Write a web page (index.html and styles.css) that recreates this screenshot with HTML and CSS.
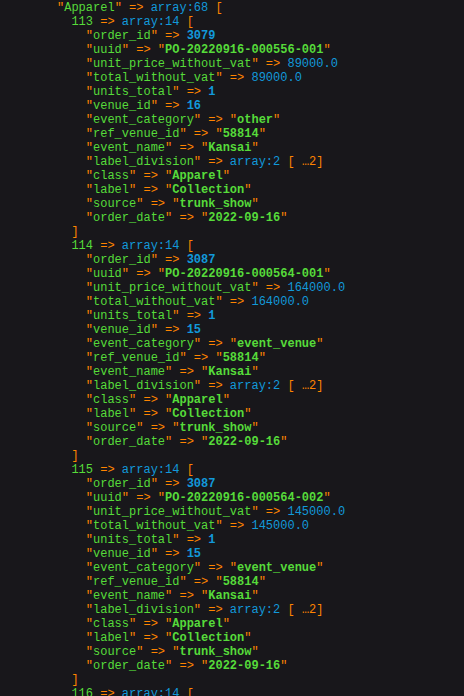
FILE: index.html
```html
<!DOCTYPE html>
<html>
<head>
<meta charset="utf-8">
<link rel="stylesheet" href="styles.css">
</head>
<body>
<pre class="dump">"<span class="k">Apparel</span>" =&gt; <span class="note">array:68</span> [
  <span class="i">113</span> =&gt; <span class="note">array:14</span> [
    "<span class="k">order_id</span>" =&gt; <span class="n">3079</span>
    "<span class="k">uuid</span>" =&gt; "<span class="s">PO-20220916-000556-001</span>"
    "<span class="k">unit_price_without_vat</span>" =&gt; <span class="f">89000.0</span>
    "<span class="k">total_without_vat</span>" =&gt; <span class="f">89000.0</span>
    "<span class="k">units_total</span>" =&gt; <span class="n">1</span>
    "<span class="k">venue_id</span>" =&gt; <span class="n">16</span>
    "<span class="k">event_category</span>" =&gt; "<span class="s">other</span>"
    "<span class="k">ref_venue_id</span>" =&gt; "<span class="s">58814</span>"
    "<span class="k">event_name</span>" =&gt; "<span class="s">Kansai</span>"
    "<span class="k">label_division</span>" =&gt; <span class="note">array:2</span> [ …2]
    "<span class="k">class</span>" =&gt; "<span class="s">Apparel</span>"
    "<span class="k">label</span>" =&gt; "<span class="s">Collection</span>"
    "<span class="k">source</span>" =&gt; "<span class="s">trunk_show</span>"
    "<span class="k">order_date</span>" =&gt; "<span class="s">2022-09-16</span>"
  ]
  <span class="i">114</span> =&gt; <span class="note">array:14</span> [
    "<span class="k">order_id</span>" =&gt; <span class="n">3087</span>
    "<span class="k">uuid</span>" =&gt; "<span class="s">PO-20220916-000564-001</span>"
    "<span class="k">unit_price_without_vat</span>" =&gt; <span class="f">164000.0</span>
    "<span class="k">total_without_vat</span>" =&gt; <span class="f">164000.0</span>
    "<span class="k">units_total</span>" =&gt; <span class="n">1</span>
    "<span class="k">venue_id</span>" =&gt; <span class="n">15</span>
    "<span class="k">event_category</span>" =&gt; "<span class="s">event_venue</span>"
    "<span class="k">ref_venue_id</span>" =&gt; "<span class="s">58814</span>"
    "<span class="k">event_name</span>" =&gt; "<span class="s">Kansai</span>"
    "<span class="k">label_division</span>" =&gt; <span class="note">array:2</span> [ …2]
    "<span class="k">class</span>" =&gt; "<span class="s">Apparel</span>"
    "<span class="k">label</span>" =&gt; "<span class="s">Collection</span>"
    "<span class="k">source</span>" =&gt; "<span class="s">trunk_show</span>"
    "<span class="k">order_date</span>" =&gt; "<span class="s">2022-09-16</span>"
  ]
  <span class="i">115</span> =&gt; <span class="note">array:14</span> [
    "<span class="k">order_id</span>" =&gt; <span class="n">3087</span>
    "<span class="k">uuid</span>" =&gt; "<span class="s">PO-20220916-000564-002</span>"
    "<span class="k">unit_price_without_vat</span>" =&gt; <span class="f">145000.0</span>
    "<span class="k">total_without_vat</span>" =&gt; <span class="f">145000.0</span>
    "<span class="k">units_total</span>" =&gt; <span class="n">1</span>
    "<span class="k">venue_id</span>" =&gt; <span class="n">15</span>
    "<span class="k">event_category</span>" =&gt; "<span class="s">event_venue</span>"
    "<span class="k">ref_venue_id</span>" =&gt; "<span class="s">58814</span>"
    "<span class="k">event_name</span>" =&gt; "<span class="s">Kansai</span>"
    "<span class="k">label_division</span>" =&gt; <span class="note">array:2</span> [ …2]
    "<span class="k">class</span>" =&gt; "<span class="s">Apparel</span>"
    "<span class="k">label</span>" =&gt; "<span class="s">Collection</span>"
    "<span class="k">source</span>" =&gt; "<span class="s">trunk_show</span>"
    "<span class="k">order_date</span>" =&gt; "<span class="s">2022-09-16</span>"
  ]
  <span class="i">116</span> =&gt; <span class="note">array:14</span> [
</pre>
</body>
</html>
```

FILE: styles.css
```css
html, body {
  margin: 0;
  padding: 0;
  background: #18171b;
  height: 100%;
  overflow: hidden;
}
.dump {
  margin: 0;
  padding: 1px 0 0 57px;
  font-family: "Liberation Mono", monospace;
  font-size: 12px;
  line-height: 14px;
  color: #ff8400;
  background: #18171b;
  white-space: pre;
}
.k { color: #56db3a; }
.i { color: #56db3a; }
.s { color: #56db3a; font-weight: bold; }
.n { color: #1299da; font-weight: bold; }
.f { color: #1299da; }
.note { color: #1299da; }
```
